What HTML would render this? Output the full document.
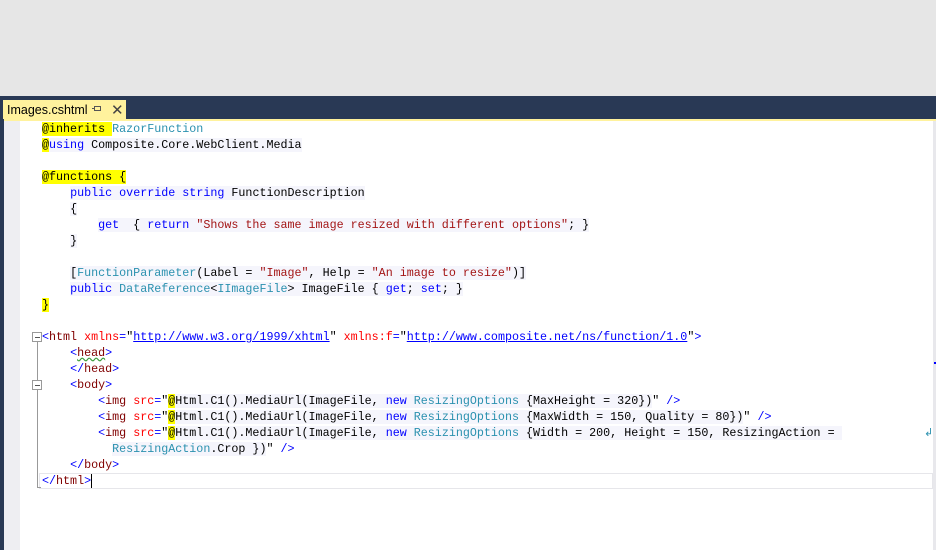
<!DOCTYPE html>
<html><head><style>
html,body{margin:0;width:936px;height:550px;overflow:hidden}
body{background:#fff;position:relative;font-family:"Liberation Sans",sans-serif}
.top{position:absolute;left:0;top:0;width:936px;height:96px;background:#e6e6e6}
.bar{position:absolute;left:0;top:96px;width:936px;height:23px;background:#293955}
.yl{position:absolute;left:0;top:119px;width:936px;height:2px;background:#fff29d}
.tab{position:absolute;left:3px;top:100px;width:123px;height:21px;background:#fff29d;font-size:12.5px;color:#000}
.tab span{position:absolute;top:3px}
.lg{position:absolute;left:0;top:119px;width:4px;height:431px;background:#293955}
.gut{position:absolute;left:4px;top:121px;width:16px;height:429px;background:#eeeef2}
.code{position:absolute;left:42px;top:121px;font-family:"Liberation Mono",monospace;font-size:11.7px;line-height:16px;color:#000}
.l{height:16px;white-space:pre}
.k{color:#0000ff}.t{color:#2b91af}.s{color:#a31515}.tg{color:#800000}.a{color:#ff0000}.u{color:#0000ff;text-decoration:underline}
.y{background:#ffff00}
.bg{background:#f5f5fc}
.box{position:absolute;width:8px;height:8px;border:1px solid #999;background:#fff}
.box:after{content:"";position:absolute;left:2px;top:4px;width:5px;height:1px;background:#555}
.vl{position:absolute;left:37px;width:1px;background:#999}
.curline{position:absolute;left:39px;top:473px;width:892px;height:14px;border:1px solid #e6e6ea}
.sb{position:absolute;left:933px;top:121px;width:3px;height:429px;background:#e8e8ec}
</style></head><body>
<div class="top"></div><div class="bar"></div><div class="yl"></div>
<div class="tab"><span style="left:4px">Images.cshtml</span><span style="left:91px;top:6px;width:7px;height:5px;border:1px solid #555;box-sizing:border-box"></span><span style="left:89px;top:8px;width:3px;height:1px;background:#555"></span><span style="left:108px;top:1px;font-size:15px;color:#444">✕</span></div>
<div class="lg"></div><div class="gut"></div><div class="sb"></div>
<div class="curline"></div>
<div class="box" style="left:32px;top:332px"></div>
<div class="box" style="left:32px;top:380px"></div>
<div class="vl" style="top:342px;height:38px"></div>
<div class="vl" style="top:390px;height:98px"></div>
<div style="position:absolute;left:37px;top:487px;width:4px;height:1px;background:#999"></div>
<div class="code"><div class="l"><span class="y">@inherits </span><span class="t">RazorFunction</span></div><div class="l"><span class="bg"><span class="y">@</span><span class="k">using</span> Composite.Core.WebClient.Media</span></div><div class="l"></div><div class="l"><span class="y">@functions {</span></div><div class="l">    <span class="bg"><span class="k">public</span> <span class="k">override</span> <span class="k">string</span> FunctionDescription</span></div><div class="l">    <span class="bg">{</span></div><div class="l">        <span class="bg"><span class="k">get</span>  { <span class="k">return</span> <span class="s">"Shows the same image resized with different options"</span>; }</span></div><div class="l">    <span class="bg">}</span></div><div class="l"></div><div class="l">    <span class="bg">[<span class="t">FunctionParameter</span>(Label = <span class="s">"Image"</span>, Help = <span class="s">"An image to resize"</span>)]</span></div><div class="l">    <span class="bg"><span class="k">public</span> <span class="t">DataReference</span>&lt;<span class="t">IImageFile</span>&gt; ImageFile { <span class="k">get</span>; <span class="k">set</span>; }</span></div><div class="l"><span class="y">}</span></div><div class="l"></div><div class="l"><span class="k">&lt;</span><span class="tg">html</span> <span class="a">xmlns</span><span class="k">=</span>"<span class="u">http://www.w3.org/1999/xhtml</span>" <span class="a">xmlns:f</span><span class="k">=</span>"<span class="u">http://www.composite.net/ns/function/1.0</span>"<span class="k">&gt;</span></div><div class="l">    <span class="k">&lt;</span><span class="tg" style="text-decoration:underline wavy #3c9c3c">head</span><span class="k">&gt;</span></div><div class="l">    <span class="k">&lt;/</span><span class="tg">head</span><span class="k">&gt;</span></div><div class="l">    <span class="k">&lt;</span><span class="tg">body</span><span class="k">&gt;</span></div><div class="l">        <span class="k">&lt;</span><span class="tg">img</span> <span class="a">src</span><span class="k">=</span>"<span class="bg"><span class="y">@</span>Html.C1().MediaUrl(ImageFile, <span class="k">new</span> <span class="t">ResizingOptions</span> {MaxHeight = 320})</span>" <span class="k">/&gt;</span></div><div class="l">        <span class="k">&lt;</span><span class="tg">img</span> <span class="a">src</span><span class="k">=</span>"<span class="bg"><span class="y">@</span>Html.C1().MediaUrl(ImageFile, <span class="k">new</span> <span class="t">ResizingOptions</span> {MaxWidth = 150, Quality = 80})</span>" <span class="k">/&gt;</span></div><div class="l">        <span class="k">&lt;</span><span class="tg">img</span> <span class="a">src</span><span class="k">=</span>"<span class="bg"><span class="y">@</span>Html.C1().MediaUrl(ImageFile, <span class="k">new</span> <span class="t">ResizingOptions</span> {Width = 200, Height = 150, ResizingAction = </span></div><div class="l">          <span class="bg"><span class="t">ResizingAction</span>.Crop })</span>" <span class="k">/&gt;</span></div><div class="l">    <span class="k">&lt;/</span><span class="tg">body</span><span class="k">&gt;</span></div><div class="l"><span class="k">&lt;/</span><span class="tg">html</span><span class="k">&gt;</span><span style="border-left:1px solid #000"></span></div></div>
<div style="position:absolute;left:924px;top:426px;color:#2b91af;font-size:11px">&#x21B2;</div>
<div style="position:absolute;left:934px;top:362px;width:2px;height:2px;background:#00f"></div>
</body></html>
